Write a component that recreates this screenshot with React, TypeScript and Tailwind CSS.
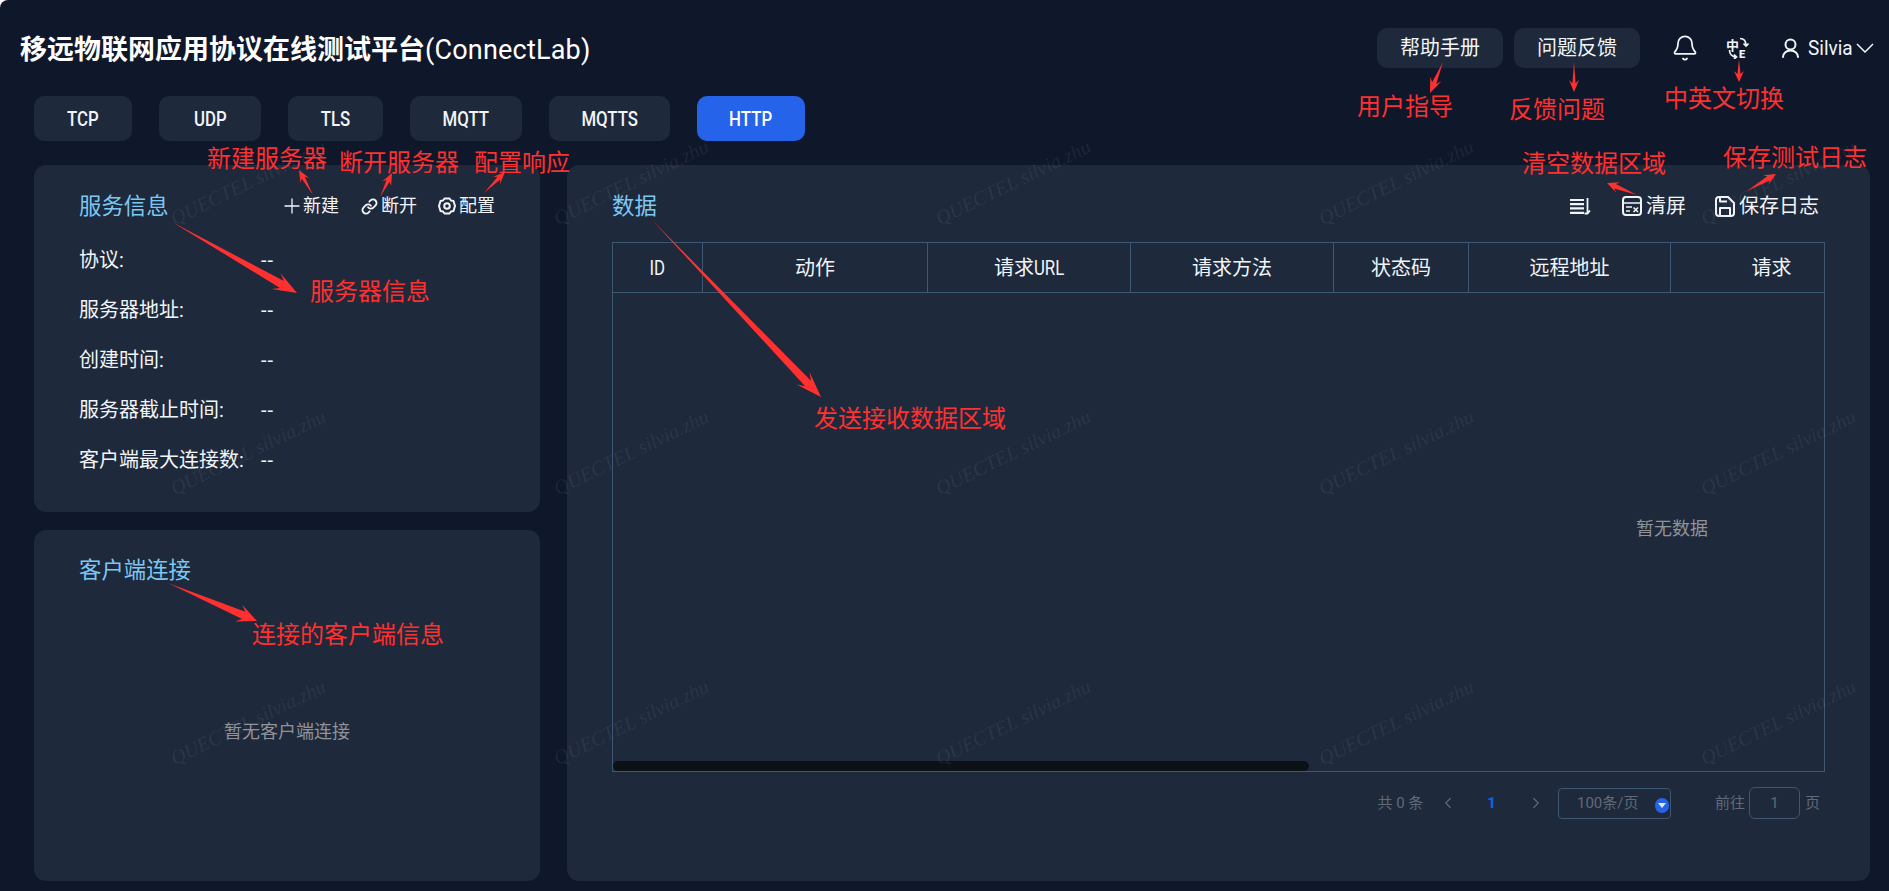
import { Bell, ChevronLeft, ChevronRight, Link, Plus } from "lucide-react";

type ArrowDef = { from: [number, number]; to: [number, number]; h: number; s: number; b: number };

const arrows: ArrowDef[] = [
  { from: [313, 195], to: [299, 170], h: 12, s: 1.8, b: 5 },
  { from: [380, 197], to: [392, 173], h: 12, s: 1.8, b: 5 },
  { from: [484, 193], to: [505, 172], h: 12, s: 1.8, b: 5 },
  { from: [172, 222], to: [297, 293], h: 24, s: 4, b: 9 },
  { from: [652, 220], to: [821, 397], h: 26, s: 4, b: 9 },
  { from: [168, 583], to: [257, 621], h: 20, s: 4, b: 9 },
  { from: [1443, 62], to: [1430, 93], h: 15, s: 2.2, b: 6 },
  { from: [1574, 62], to: [1574, 92], h: 12, s: 1.6, b: 5 },
  { from: [1739, 59], to: [1739, 82], h: 11, s: 1.6, b: 5 },
  { from: [1637, 195], to: [1607, 183], h: 12, s: 2.4, b: 5.5 },
  { from: [1747, 191], to: [1776, 174], h: 12, s: 2.4, b: 5.5 },
];

function arrowPoints({ from, to, h, s, b }: ArrowDef) {
  const dx = to[0] - from[0];
  const dy = to[1] - from[1];
  const len = Math.hypot(dx, dy);
  const ux = dx / len;
  const uy = dy / len;
  const nx = -uy;
  const ny = ux;
  const at = (back: number, side: number) =>
    `${to[0] - ux * back + nx * side},${to[1] - uy * back + ny * side}`;
  return [
    `${from[0]},${from[1]}`,
    at(h * 0.72, s),
    at(h, b),
    `${to[0]},${to[1]}`,
    at(h, -b),
    at(h * 0.72, -s),
  ].join(" ");
}

const tabs = [
  { label: "TCP", w: "w-[98px]" },
  { label: "UDP", w: "w-[102px]" },
  { label: "TLS", w: "w-[95px]" },
  { label: "MQTT", w: "w-[112px]" },
  { label: "MQTTS", w: "w-[121px]" },
  { label: "HTTP", w: "w-[108px]" },
];

const infoRows = ["协议:", "服务器地址:", "创建时间:", "服务器截止时间:", "客户端最大连接数:"];

const columns = [
  { label: "动作", w: "w-[225px]" },
  { label: "", w: "w-[203px]" },
  { label: "请求方法", w: "w-[203px]" },
  { label: "状态码", w: "w-[135px]" },
  { label: "远程地址", w: "w-[202px]" },
  { label: "请求", w: "w-[202px]" },
];

function LangIcon() {
  return (
    <svg width="23" height="22" viewBox="0 0 23 22" fill="none" stroke="currentColor" strokeWidth="1.7">
      <text x="0" y="12.500" fontSize="13" fontWeight="700" fill="currentColor" stroke="none">中</text>
      <text x="13" y="20.500" fontSize="11" fontWeight="900" fill="currentColor" stroke="none">E</text>
      <path d="M14 1.500c4 0 6 3 6 7M17.500 6.500l2.500 2.500 2.500-2.500" />
      <path d="M3.500 13c0 4 2.500 7 7 7M8 17.500l2.500 2.500-2.500 2" />
    </svg>
  );
}

function UserIcon() {
  return (
    <svg width="17" height="20" viewBox="0 0 17 20" fill="none" stroke="currentColor" strokeWidth="2" strokeLinecap="round">
      <circle cx="8.500" cy="6.500" r="5" />
      <path d="M1 19c0-3.500 3-6.500 7.500-6.500S16 15.500 16 19" />
    </svg>
  );
}

function ListIcon() {
  return (
    <svg width="21" height="17" viewBox="0 0 21 17" fill="none" stroke="currentColor" strokeWidth="2.200">
      <path d="M0 2h14M0 6.200h14M0 10.400h14M0 14.800h14" />
      <path d="M17.500 0v15M14.500 15.500h3l2.500-3" strokeWidth="1.800" />
    </svg>
  );
}

function ClearIcon() {
  return (
    <svg width="20" height="20" viewBox="0 0 20 20" fill="none" stroke="currentColor" strokeWidth="2">
      <rect x="1" y="1" width="18" height="18" rx="3" />
      <path d="M1 7h18M4 11h6M4 15h4" strokeWidth="1.600" />
      <path d="M11.500 11.500l4.500 4.500M16 11.500l-4.500 4.500" strokeWidth="1.600" />
    </svg>
  );
}

function SaveIcon() {
  return (
    <svg width="20" height="21" viewBox="0 0 20 21" fill="none" stroke="currentColor" strokeWidth="2" strokeLinejoin="round">
      <path d="M4 1h9l6 6v10a3 3 0 0 1-3 3H4a3 3 0 0 1-3-3V4a3 3 0 0 1 3-3z" />
      <path d="M5 20v-8h10v8M5 1v4.500h7" />
    </svg>
  );
}

function GearIcon() {
  return (
    <svg width="18" height="18" viewBox="0 0 18 18" fill="none" stroke="currentColor" strokeWidth="2" strokeLinejoin="round">
      <path d="M6.500 1.500h5l1.500 2 2.500.5 1.500 5-1.500 5-2.500.5-1.500 2h-5l-1.500-2-2.500-.5L1 9l1.500-5L5 3.500z" />
      <circle cx="9" cy="9" r="2.800" />
    </svg>
  );
}

function Card({ className, children }: { className: string; children: React.ReactNode }) {
  return <section className={`rounded-[12px] bg-[#1e293b] ${className}`}>{children}</section>;
}

function Title({ children }: { children: React.ReactNode }) {
  return <h2 className="text-[22.4px] leading-[30px] text-[#7cc8f4]">{children}</h2>;
}

export default function App() {
  return (
    <div className="relative flex h-[891px] w-[1889px] flex-col overflow-hidden rounded-tl-[8px] bg-[#0f172a] font-['Roboto','Noto_Sans_CJK_SC',sans-serif] text-[#f1f5f9]">
      <header className="mt-[28px] flex h-[40px] shrink-0 items-center pl-[20px] pr-[15px]">
        <h1 className="pt-[4px] text-[27px] font-bold leading-[40px] text-white">
          移远物联网应用协议在线测试平台<span className="font-normal tracking-[0.2px]">(ConnectLab)</span>
        </h1>
        <div className="ml-auto flex items-center">
          <button className="h-[40px] w-[126px] rounded-[10px] bg-[#1e293b] text-[20px]">帮助手册</button>
          <button className="ml-[11px] h-[40px] w-[126px] rounded-[10px] bg-[#1e293b] text-[20px]">问题反馈</button>
          <Bell size={28} strokeWidth={1.5} className="ml-[31px]" />
          <span className="ml-[27px] flex w-[23px]"><LangIcon /></span>
          <span className="ml-[33px] flex"><UserIcon /></span>
          <span className="ml-[9px] inline-block w-[45px] origin-left scale-x-[0.95] whitespace-nowrap text-[20px] leading-[24px]">Silvia</span>
          <svg width="18" height="10" viewBox="0 0 18 10" fill="none" stroke="currentColor" strokeWidth="1.500" className="ml-[3px]">
            <path d="M1 1l8 8 8-8" />
          </svg>
        </div>
      </header>

      <nav className="mt-[28px] flex h-[45px] shrink-0 gap-[27px] pl-[34px]">
        {tabs.map((t) => (
          <button
            key={t.label}
            className={`${t.w} rounded-[10px] text-[20px] font-medium ${t.label === "HTTP" ? "bg-[#2563eb] text-white" : "bg-[#1e293b]"}`}
          >
            <span className="inline-block scale-x-[0.84]">{t.label}</span>
          </button>
        ))}
      </nav>

      <main className="mt-[24px] flex min-h-0 flex-1 gap-[27px] pb-[10px] pl-[34px] pr-[19px]">
        <div className="flex w-[506px] shrink-0 flex-col gap-[18px]">
          <Card className="h-[347px] pl-[45px] pr-[45px] pt-[26px]">
            <div className="flex items-center justify-between">
              <Title>服务信息</Title>
              <div className="flex items-center text-[18px] leading-[30px]">
                <Plus size={24} strokeWidth={1.3} />
                <span className="-ml-[1px]">新建</span>
                <Link size={17} strokeWidth={2.6} className="ml-[22px]" />
                <span className="ml-[3px]">断开</span>
                <span className="ml-[21px] flex"><GearIcon /></span>
                <span className="ml-[3px]">配置</span>
              </div>
            </div>
            <dl className="mt-[14px]">
              {infoRows.map((r) => (
                <div key={r} className="flex h-[50px] items-center text-[20px]">
                  <dt className="w-[182px]">{r}</dt>
                  <dd className="tracking-[1px]">--</dd>
                </div>
              ))}
            </dl>
          </Card>
          <Card className="flex min-h-0 flex-1 flex-col pl-[45px] pr-[45px] pt-[25px]">
            <Title>客户端连接</Title>
            <div className="flex flex-1 items-center justify-center pb-[4px] text-[18px] text-[#909399]">暂无客户端连接</div>
          </Card>
        </div>

        <Card className="flex min-w-0 flex-1 flex-col pl-[45px] pr-[45px] pt-[26px]">
          <div className="flex h-[30px] items-center pr-[6px]">
            <Title>数据</Title>
            <div className="ml-auto flex items-center text-[20px]">
              <ListIcon />
              <span className="ml-[31px] flex"><ClearIcon /></span>
              <span className="ml-[4px]">清屏</span>
              <span className="ml-[29px] flex"><SaveIcon /></span>
              <span className="ml-[4px]">保存日志</span>
            </div>
          </div>

          <div className="relative mt-[21px] h-[530px] overflow-hidden border border-[#3e5772]">
            <div className="flex h-full w-[2118px] flex-col">
              <div className="flex h-[50px] shrink-0 border-b border-[#3e5772] text-[20px]">
                <div className="flex w-[90px] shrink-0 items-center justify-center border-r border-[#3e5772]">
                  <span className="inline-block scale-x-[0.84]">ID</span>
                </div>
                {columns.map((c, i) => (
                  <div key={i} className={`${c.w} flex shrink-0 items-center justify-center border-r border-[#3e5772]`}>
                    {c.label || (
                      <>
                        请求<span className="-mx-[3px] inline-block scale-x-[0.84]">URL</span>
                      </>
                    )}
                  </div>
                ))}
              </div>
              <div className="flex flex-1 items-center justify-center pb-[8px] text-[18px] text-[#909399]">暂无数据</div>
            </div>
            <div className="absolute bottom-0 left-0 h-[10px] w-[696px] rounded-full bg-[#0c1116]" />
          </div>

          <div className="mt-[15px] flex h-[32px] items-center justify-end pr-[5px] text-[15px] text-[#606a78]">
            <span>共 0 条</span>
            <ChevronLeft size={18} strokeWidth={1.5} className="ml-[16px]" />
            <span className="ml-[30px] font-bold text-[#0b63f6]">1</span>
            <ChevronRight size={18} strokeWidth={1.5} className="ml-[31px]" />
            <div className="relative ml-[13px] flex h-[31px] w-[113px] items-center rounded-[4px] border border-[#3e5772] pl-[18px]">
              100条/页
              <span className="absolute right-[1px] top-[9px] flex h-[15px] w-[14px] items-center justify-center rounded-full bg-[#2563eb]">
                <span className="h-0 w-0 border-x-[4px] border-t-[5px] border-x-transparent border-t-[#e2e8f0]" />
              </span>
            </div>
            <span className="ml-[44px]">前往</span>
            <div className="ml-[4px] flex h-[32px] w-[51px] items-center justify-center rounded-[6px] border border-[#3e5772]">1</div>
            <span className="ml-[5px]">页</span>
          </div>
        </Card>
      </main>

      {/* watermark */}
      <div className="pointer-events-none absolute inset-0 grid auto-rows-[270px] grid-cols-[repeat(5,382.500px)] overflow-hidden pl-[57px] pt-[47px]">
        {Array.from({ length: 15 }).map((_, i) => (
          <div key={i} className="flex items-center justify-center">
            <span className="-rotate-[26deg] whitespace-nowrap font-['Liberation_Serif',serif] text-[20px] italic text-[#8e9bb0]/12">
              QUECTEL silvia.zhu
            </span>
          </div>
        ))}
      </div>

      {/* red annotations */}
      <svg className="pointer-events-none absolute inset-0" width="1889" height="891" fill="#ff3030">
        {arrows.map((a, i) => (
          <polygon key={i} points={arrowPoints(a)} />
        ))}
      </svg>
      <div className="pointer-events-none text-[24px] leading-[26px] text-[#ff3030]">
        <span className="absolute left-[207px] top-[146px]">新建服务器</span>
        <span className="absolute left-[339px] top-[150px]">断开服务器</span>
        <span className="absolute left-[474px] top-[150px]">配置响应</span>
        <span className="absolute left-[310px] top-[279px]">服务器信息</span>
        <span className="absolute left-[814px] top-[406px]">发送接收数据区域</span>
        <span className="absolute left-[252px] top-[622px]">连接的客户端信息</span>
        <span className="absolute left-[1357px] top-[94px]">用户指导</span>
        <span className="absolute left-[1509px] top-[97px]">反馈问题</span>
        <span className="absolute left-[1664px] top-[86px]">中英文切换</span>
        <span className="absolute left-[1522px] top-[151px]">清空数据区域</span>
        <span className="absolute left-[1723px] top-[145px]">保存测试日志</span>
      </div>
    </div>
  );
}
